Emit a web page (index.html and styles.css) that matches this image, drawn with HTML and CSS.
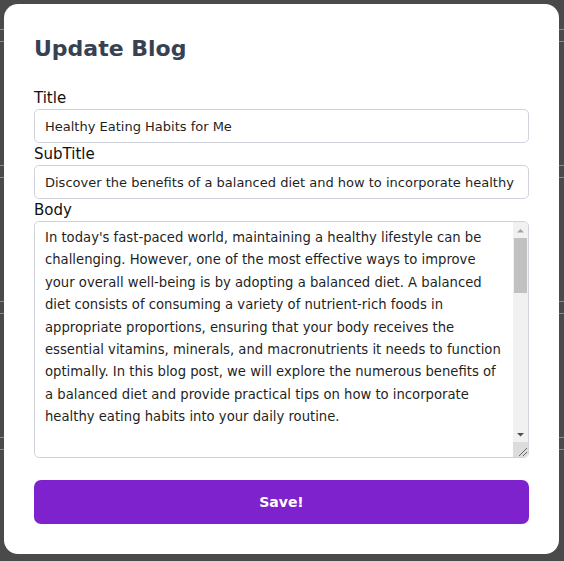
FILE: index.html
```html
<!DOCTYPE html>
<html lang="en">
<head>
<meta charset="utf-8">
<title>Update Blog</title>
<link rel="stylesheet" href="styles.css">
</head>
<body>
<div class="backdrop">
  <div class="row"><div class="band"></div></div>
  <div class="row"><div class="band"></div></div>
  <div class="row"><div class="band"></div></div>
  <div class="row"><div class="band"></div></div>
</div>
<div class="modal">
  <h2 class="modal-title">Update Blog</h2>
  <form class="form">
    <label class="label" for="title">Title</label>
    <input class="field" id="title" type="text" value="Healthy Eating Habits for Me">
    <label class="label" for="subtitle">SubTitle</label>
    <input class="field" id="subtitle" type="text" value="Discover the benefits of a balanced diet and how to incorporate healthy eating habits into your daily routine.">
    <label class="label" for="body">Body</label>
    <div class="area-wrap">
      <textarea class="area" id="body">In today's fast-paced world, maintaining a healthy lifestyle can be challenging. However, one of the most effective ways to improve your overall well-being is by adopting a balanced diet. A balanced diet consists of consuming a variety of nutrient-rich foods in appropriate proportions, ensuring that your body receives the essential vitamins, minerals, and macronutrients it needs to function optimally. In this blog post, we will explore the numerous benefits of a balanced diet and provide practical tips on how to incorporate healthy eating habits into your daily routine.


Benefits of a Balanced Diet: A balanced diet provides your body with the energy it needs to stay active throughout the day. It supports a strong immune system, helps maintain a healthy weight, and reduces the risk of chronic diseases such as heart disease, diabetes, and certain types of cancer.

Tips for Healthy Eating: Start by filling half of your plate with fruits and vegetables. Choose whole grains over refined grains, include lean sources of protein, and limit your intake of added sugars, sodium, and saturated fats. Stay hydrated by drinking plenty of water throughout the day.

Plan your meals ahead of time, keep healthy snacks within reach, and listen to your body's hunger and fullness cues. Small, consistent changes can lead to lasting results and a healthier, happier you.</textarea>
      <div class="scrollbar" aria-hidden="true">
        <div class="sb-btn">
          <svg width="15" height="16" viewBox="0 0 15 16"><path d="M4 10.5 L7.5 7 L11 10.5 Z" fill="#a3a3a3"/></svg>
        </div>
        <div class="sb-track"><div class="sb-thumb"></div></div>
        <div class="sb-btn">
          <svg width="15" height="16" viewBox="0 0 15 16"><path d="M4 7 L7.5 10.5 L11 7 Z" fill="#505050"/></svg>
        </div>
        <div class="sb-corner">
          <svg width="15" height="15" viewBox="0 0 15 15"><path d="M14 6 L6 14 M14 10 L10 14" stroke="#6a6a6a" stroke-width="1"/></svg>
        </div>
      </div>
    </div>
    <button class="save" type="button">Save!</button>
  </form>
</div>
</body>
</html>
```

FILE: styles.css
```css
* {
  box-sizing: border-box;
}

html, body {
  margin: 0;
  height: 100%;
}

body {
  background: #4a4a4a;
  font-family: "DejaVu Sans", Verdana, sans-serif;
  overflow: hidden;
}

.backdrop {
  padding-top: 29px;
}

.row {
  height: 136px;
}

.band {
  height: 13px;
  border-top: 1px solid #8a8a8a;
  border-bottom: 1px solid #8a8a8a;
}

.modal {
  position: fixed;
  top: 4px;
  left: 4px;
  width: 555px;
  height: 550px;
  background: #ffffff;
  border-radius: 14px;
  padding: 31px 30px 30px 30px;
}

.modal-title {
  margin: 0 0 24px 0;
  font-size: 22px;
  line-height: 28px;
  font-weight: bold;
  color: #374151;
}

.form {
  display: flex;
  flex-direction: column;
  margin: 0;
}

.label {
  display: block;
  font-size: 15px;
  line-height: 22px;
  height: 22px;
  color: #111111;
}

.field {
  display: block;
  width: 100%;
  height: 34px;
  margin: 0;
  padding: 0 10px;
  border: 1px solid #d1d3dc;
  border-radius: 5px;
  font-family: "DejaVu Sans", Verdana, sans-serif;
  font-size: 13px;
  color: #1f1f1f;
  background: #ffffff;
  outline: none;
}

.area-wrap {
  position: relative;
  height: 237px;
}

.area {
  display: block;
  width: 100%;
  height: 237px;
  margin: 0;
  padding: 5px 25px 5px 10px;
  border: 1px solid #d1d3dc;
  border-radius: 5px;
  font-family: "DejaVu Sans", Verdana, sans-serif;
  font-size: 13.2px;
  line-height: 22.4px;
  color: #1f1f1f;
  background: #ffffff;
  outline: none;
  overflow: hidden;
  resize: none;
}

.scrollbar {
  position: absolute;
  top: 1px;
  right: 1px;
  bottom: 1px;
  width: 15px;
  display: flex;
  flex-direction: column;
  background: #f1f1f1;
  border-top-right-radius: 4px;
}

.sb-btn {
  height: 16px;
  flex: none;
}

.sb-btn svg,
.sb-corner svg {
  display: block;
}

.sb-track {
  flex: 1;
  padding: 0 1px;
}

.sb-thumb {
  height: 55px;
  background: #c1c1c1;
}

.sb-corner {
  height: 15px;
  flex: none;
  background: #dcdcdc;
  border-bottom-right-radius: 4px;
}

.save {
  display: block;
  width: 100%;
  height: 44px;
  margin-top: 22px;
  border: none;
  border-radius: 7px;
  background: #7e22ce;
  color: #ffffff;
  font-family: "DejaVu Sans", Verdana, sans-serif;
  font-size: 14px;
  font-weight: bold;
  cursor: pointer;
}
```
